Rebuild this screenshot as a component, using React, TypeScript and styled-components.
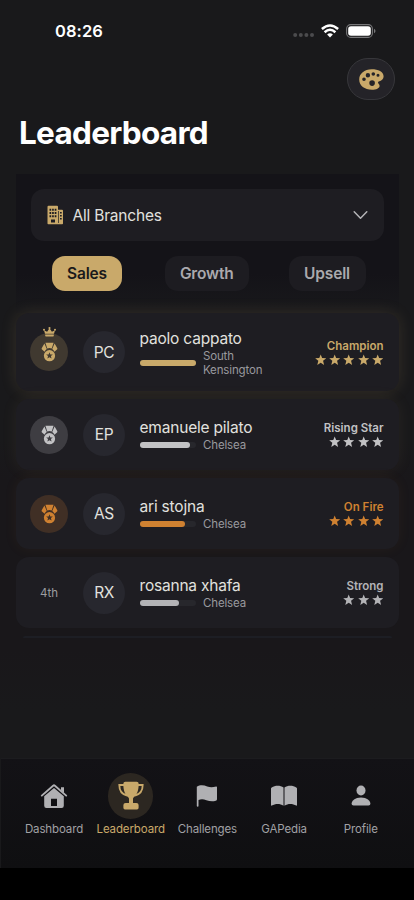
import React from "react";
import styled, { createGlobalStyle } from "styled-components";

const GOLD = "#c9a96a";
const SILVER = "#c2c2c4";
const BRONZE = "#cf8131";

const GlobalStyle = createGlobalStyle`
  *, *::before, *::after { box-sizing: border-box; }
  html, body { margin: 0; padding: 0; background: #000; }
  body { font-family: Inter, "Liberation Sans", sans-serif; }
  svg { display: block; flex: none; }
`;

const Screen = styled.div`
  width: 414px;
  height: 900px;
  overflow: hidden;
  display: flex;
  flex-direction: column;
  background: #000;
`;

const Main = styled.main`
  height: 758px;
  display: flex;
  flex-direction: column;
  background: linear-gradient(180deg, #19191b 0, #19191b 440px, #19171a 480px, #19171a 650px, #19191b 710px);
`;

const StatusBar = styled.div`
  height: 58px;
  padding: 20px 37px 0 55px;
  display: flex;
  justify-content: space-between;
  align-items: flex-start;
`;

const Clock = styled.span`
  font-size: 16.5px;
  line-height: 22px;
  font-weight: 600;
  letter-spacing: 0.08px;
  color: #fff;
`;

const Indicators = styled.div`
  display: flex;
  align-items: center;
  height: 22px;
`;

const WifiSlot = styled.div`
  margin: 0 7px 0 5px;
`;

const Toolbar = styled.div`
  display: flex;
  justify-content: flex-end;
  padding-right: 19px;
  height: 58px;
`;

const RoundButton = styled.button`
  width: 48px;
  height: 42px;
  padding: 0;
  display: flex;
  align-items: center;
  justify-content: center;
  border: 1px solid #37373b;
  border-radius: 21px;
  background: #242328;
`;

const Title = styled.h1`
  margin: 0 0 0 19px;
  height: 58px;
  font-size: 31.5px;
  line-height: 33px;
  font-weight: 700;
  letter-spacing: -0.72px;
  color: #fff;
`;

const Filters = styled.section`
  height: 139px;
  margin: 0 15px 0 15.5px;
  padding: 15px 15.5px 0 15px;
  background: linear-gradient(180deg, #141318 0, #141318 100px, #18181b 133px);
`;

const BranchSelect = styled.button`
  width: 100%;
  height: 52px;
  padding: 0 16px;
  display: flex;
  align-items: center;
  border: 0;
  border-radius: 13px;
  background: #1e1d22;
  color: #e1e1df;
  font: 400 15.5px/20px Inter, sans-serif;
  letter-spacing: -0.2px;
`;

const SelectLabel = styled.span`
  flex: 1;
  margin-left: 9px;
  padding-top: 1px;
  text-align: left;
`;

const Tabs = styled.div`
  display: flex;
  padding: 15px 18px 0 21.5px;
`;

const Tab = styled.button<{ $active?: boolean; $width: number; $gap?: number }>`
  width: ${(p) => p.$width}px;
  height: 34.5px;
  margin-left: ${(p) => p.$gap ?? 0}px;
  padding: 1px 0 0;
  border: 0;
  border-radius: 13px;
  background: ${(p) => (p.$active ? GOLD : "#1d1c21")};
  color: ${(p) => (p.$active ? "#1a191b" : "#aaa9ad")};
  font: 600 15.5px/20px Inter, sans-serif;
  letter-spacing: -0.15px;
`;

const List = styled.section`
  display: flex;
  flex-direction: column;
  gap: 8px;
  padding: 0 15px 0 15.5px;
`;

const Card = styled.article<{ $tall?: boolean; $glow: string }>`
  height: ${(p) => (p.$tall ? 78 : 71)}px;
  padding: 0 15.5px 0 14.5px;
  display: flex;
  align-items: center;
  border-radius: 13px;
  background: #1e1d22;
  box-shadow: ${(p) => p.$glow};
`;

const Rank = styled.div<{ $bg: string }>`
  position: relative;
  width: 38px;
  height: 38px;
  border-radius: 50%;
  display: flex;
  align-items: center;
  justify-content: center;
  background: ${(p) => p.$bg};
  color: #9d9da1;
  font-size: 11.5px;
`;

const CrownSlot = styled.div`
  position: absolute;
  top: -6.5px;
  left: 12.5px;
`;

const Avatar = styled.div`
  width: 42px;
  height: 42px;
  margin-left: 15px;
  border-radius: 50%;
  display: flex;
  align-items: center;
  justify-content: center;
  background: #27272e;
  color: #e1e1df;
  font-size: 15.5px;
  letter-spacing: -0.4px;
`;

const Info = styled.div`
  flex: 1;
  margin-left: 14.5px;
  padding-top: 2px;
`;

const Name = styled.div`
  font-size: 15.5px;
  line-height: 20px;
  letter-spacing: -0.2px;
  color: #e1e1df;
`;

const Meta = styled.div`
  display: flex;
  align-items: center;
  margin-top: 1px;
`;

const Track = styled.div`
  width: 56.5px;
  height: 6px;
  margin-bottom: 2px;
  border-radius: 3px;
  background: #27272c;
`;

const Fill = styled.div<{ $color: string }>`
  height: 6px;
  border-radius: 3px;
  background: ${(p) => p.$color};
`;

const Branch = styled.div`
  width: 75px;
  margin-left: 7px;
  font-size: 11.5px;
  line-height: 13.5px;
  letter-spacing: -0.15px;
  color: #99999e;
`;

const Score = styled.div<{ $color: string }>`
  display: flex;
  flex-direction: column;
  align-items: flex-end;
  color: ${(p) => p.$color};
  font-size: 11.5px;
  line-height: 15px;
  font-weight: 600;
`;

const Stars = styled.div`
  display: flex;
  gap: 2.8px;
  margin-right: 0.3px;
`;

const NextCard = styled.div`
  height: 1.5px;
  margin: 0 7px;
  border-radius: 2px 2px 0 0;
  background: #1d1e24;
`;

const Nav = styled.nav`
  height: 110px;
  padding: 14px 14px 0 14.7px;
  display: grid;
  grid-template-columns: repeat(5, 76.7px);
  border-top: 1px solid #1c1c1f;
  border-left: 1px solid #19191b;
  background: linear-gradient(180deg, #131216, #0f0f11);
`;

const NavItem = styled.a<{ $active?: boolean }>`
  display: flex;
  flex-direction: column;
  align-items: center;
  color: ${(p) => (p.$active ? GOLD : "#a1a1a5")};
  font-size: 11.5px;
  line-height: 14px;
  letter-spacing: -0.12px;
  white-space: nowrap;
`;

const NavIcon = styled.div<{ $active?: boolean }>`
  width: 45.5px;
  height: 45.5px;
  margin-bottom: 3.5px;
  border-radius: 50%;
  display: flex;
  align-items: center;
  justify-content: center;
  color: ${(p) => (p.$active ? GOLD : "#b0b0b3")};
  background: ${(p) => (p.$active ? "#2c2721" : "transparent")};
`;

const SignalDots = () => (
  <svg width="23" height="22" viewBox="0 0 23 22" fill="#4b4b4d">
    {[2.2, 7.8, 13.4, 19].map((x) => (
      <circle key={x} cx={x} cy="15" r="2" />
    ))}
  </svg>
);

const Wifi = () => (
  <svg width="18" height="14" viewBox="0 0 18 14" fill="none" stroke="#fff" strokeWidth="2.5">
    <path d="M.9 5Q9-2.1 17.1 5" />
    <path d="M3.6 8.2Q9 3.4 14.4 8.2" />
    <path d="M6.1 10.4Q9 8 11.9 10.4L9 13.4Z" fill="#fff" stroke="none" />
  </svg>
);

const Battery = () => (
  <svg width="31" height="14" viewBox="0 0 31 14">
    <rect x=".6" y=".6" width="25.8" height="12.8" rx="4.2" fill="none" stroke="#777779" strokeWidth="1.1" />
    <rect x="2.2" y="2.2" width="22.6" height="9.6" rx="2.8" fill="#fff" />
    <path d="M28 4.7Q29.5 5.5 29.5 7T28 9.3Z" fill="#777779" />
  </svg>
);

const Palette = () => (
  <svg width="25" height="21" viewBox="0 0 25 21">
    <path
      fill={GOLD}
      fillRule="evenodd"
      d="M12.7.3C5.4.3.2 4.6.2 10.5.2 16.7 5.6 20.7 13 20.7c4.2 0 7.6-1.5 7.6-4 0-1.6-1.6-2.1-1.6-3.2 0-1 1-1.2 2.2-1.6 1.8-.6 3.4-2 3.4-4.6C24.6 2.7 19.2.3 12.7.3ZM5 8.4a1.8 1.8 0 1 1 0 3.6 1.8 1.8 0 0 1 0-3.6ZM8.9 4.1a2.2 2.2 0 1 1 0 4.4 2.2 2.2 0 0 1 0-4.4ZM14.3 3.2a1.8 1.8 0 1 1 0 3.6 1.8 1.8 0 0 1 0-3.6ZM19 4.7a1.5 1.5 0 1 1 0 3 1.5 1.5 0 0 1 0-3ZM13.1 11.3a2.8 2.8 0 1 1 0 5.6 2.8 2.8 0 0 1 0-5.6Z"
    />
  </svg>
);

const Building = () => (
  <svg width="17" height="20" viewBox="0 0 17 20">
    <path
      fill={GOLD}
      fillRule="evenodd"
      d="M1.5.8H10q1 0 1 1v3h4q1 0 1 1v12.7q0 .8-.8.8H1.3q-.8 0-.8-.8V1.8q0-1 1-1ZM2.5 3.7v2h1.7v-2ZM5.1 3.7v2h1.7v-2ZM7.7 3.7v2h1.7v-2ZM2.5 7v2h1.7V7ZM5.1 7v2h1.7V7ZM7.7 7v2h1.7V7ZM2.5 10.3v2h1.7v-2ZM5.1 10.3v2h1.7v-2ZM7.7 10.3v2h1.7v-2ZM4 14.5v3.1h4v-3.1ZM11.1 6v12h.7V6ZM13 7v1.5h1.7V7ZM13 10v1.5h1.7V10ZM13 13v1.5h1.7V13Z"
    />
  </svg>
);

const Chevron = () => (
  <svg width="15" height="10" viewBox="0 0 15 10" fill="none" stroke="#b4b4b7" strokeWidth="1.5" strokeLinecap="round" strokeLinejoin="round">
    <path d="M1.2 1.7 7.5 8.2 13.8 1.7" />
  </svg>
);

const STAR_PATH = "M6 .2 7.5 4 11.8 4.2 8.5 6.9 9.6 11.2 6 8.8 2.4 11.2 3.5 6.9 .2 4.2 4.5 4Z";

const Star = () => (
  <svg width="11.4" height="11.4" viewBox="0 0 12 11.4" fill="currentColor">
    <path d={STAR_PATH} />
  </svg>
);

const Medal = ({ color, hole }: { color: string; hole: string }) => (
  <svg width="17" height="20" viewBox="0 0 17 20" fill={color}>
    <path d="M4.4.8H12.6L10.7 6.5Q8.5 5.7 6.3 6.5Z" />
    <path d="M3.4 1.6 5.8 7Q4.2 8.1 3.6 9.8L1 7.5Q.4 6.9.7 6.2ZM13.6 1.6 11.2 7Q12.8 8.1 13.4 9.8L16 7.5Q16.6 6.9 16.3 6.2Z" />
    <circle cx="8.5" cy="13.7" r="5.6" />
    <path fill={hole} transform="translate(5 10.1) scale(.58)" d={STAR_PATH} />
  </svg>
);

const Crown = () => (
  <svg width="13" height="10" viewBox="0 0 13 10" fill={GOLD}>
    <path d="M2 6.8 1 3.3 4.1 4.8 6.5 1.2 8.9 4.8 12 3.3 11 6.8ZM2.2 7.5H10.8V8.7Q10.8 9.5 10 9.5H3Q2.2 9.5 2.2 8.7Z" />
    <circle cx="1" cy="2.8" r="1" />
    <circle cx="6.5" cy="1.1" r="1.1" />
    <circle cx="12" cy="2.8" r="1" />
  </svg>
);

const House = () => (
  <svg width="28" height="26" viewBox="0 0 28 26">
    <path d="M1.8 12.6 13.1 2.7Q14 2 14.9 2.7L26.2 12.6" fill="none" stroke="currentColor" strokeWidth="1.9" strokeLinecap="round" />
    <path d="M21 4.2H24V10L21 7.4Z" fill="currentColor" />
    <path fill="currentColor" fillRule="evenodd" d="M4.2 13.2 14 5.1 23.8 13.2V22.8Q23.8 25 21.6 25H6.4Q4.2 25 4.2 22.8ZM11 15.8V23H17V15.8Z" />
  </svg>
);

const Trophy = () => (
  <svg width="26" height="29" viewBox="0 0 26 29">
    <path d="M6 4H1.3C1.3 9.5 3.4 13.2 9 14.5M20 4H24.7C24.7 9.5 22.6 13.2 17 14.5" fill="none" stroke="currentColor" strokeWidth="1.8" />
    <path fill="currentColor" d="M7.4.8H18.6Q20.7.8 20.7 3C20.7 10 18.6 14.2 15.6 16.6Q15 17.1 15 18V22H18.4Q20.6 22 20.6 24V26.7Q20.6 28.4 19 28.4H7Q5.4 28.4 5.4 26.7V24Q5.4 22 7.6 22H11V18Q11 17.1 10.4 16.6C7.4 14.2 5.3 10 5.3 3Q5.3.8 7.4.8Z" />
  </svg>
);

const Flag = () => (
  <svg width="22" height="24" viewBox="0 0 22 24" fill="currentColor">
    <path d="M.8 2.8C4.2.5 8 1.2 11.2 2.4 14.5 3.7 17.2 3.2 20.2 2.5Q21 2.4 21 3.3V15.3Q21 16.5 19.8 16.8C16.5 17.8 13.3 17.3 10.4 16.2 7.2 15 4.5 15.2 2.5 16V22Q2.5 22.8 1.7 22.8T.8 22Z" />
  </svg>
);

const Book = () => (
  <svg width="28" height="22" viewBox="0 0 28 22" fill="currentColor">
    <path d="M13.5 2.5V20.7C10 18.3 5.2 18.5 1.8 20.6Q1 21 1 20V3.6Q1 2.9 1.7 2.4C5 .2 10.5.2 13.5 2.5ZM14.5 2.5V20.7C18 18.3 22.8 18.5 26.2 20.6Q27 21 27 20V3.6Q27 2.9 26.3 2.4C23 .2 17.5.2 14.5 2.5Z" />
  </svg>
);

const Person = () => (
  <svg width="20" height="21" viewBox="0 0 20 21" fill="currentColor">
    <ellipse cx="10" cy="5.5" rx="4.5" ry="5" />
    <path d="M.6 18.8C.6 15.7 4.1 12.4 10 12.4S19.4 15.7 19.4 18.8Q19.4 20.6 17.5 20.6H2.5Q.6 20.6.6 18.8Z" />
  </svg>
);

const players = [
  { name: "paolo cappato", initials: "PC", branch: "South Kensington", level: "Champion", stars: 5, value: 100, color: GOLD, badge: "#403930", glow: "0 0 16px #c9a96a28" },
  { name: "emanuele pilato", initials: "EP", branch: "Chelsea", level: "Rising Star", stars: 4, value: 90, color: SILVER, badge: "#3e3d42", glow: "0 0 16px #c9a96a14" },
  { name: "ari stojna", initials: "AS", branch: "Chelsea", level: "On Fire", stars: 4, value: 80, color: BRONZE, badge: "#402f25", glow: "0 0 14px #cf813110" },
  { name: "rosanna xhafa", initials: "RX", branch: "Chelsea", level: "Strong", stars: 3, value: 70, color: "#b3b3b6", badge: "", glow: "none" },
];

const navItems = [
  { label: "Dashboard", icon: <House /> },
  { label: "Leaderboard", icon: <Trophy />, active: true },
  { label: "Challenges", icon: <Flag /> },
  { label: "GAPedia", icon: <Book /> },
  { label: "Profile", icon: <Person /> },
];

export default function App() {
  return (
    <>
      <GlobalStyle />
      <Screen>
        <Main>
          <StatusBar>
            <Clock>08:26</Clock>
            <Indicators>
              <SignalDots />
              <WifiSlot><Wifi /></WifiSlot>
              <Battery />
            </Indicators>
          </StatusBar>
          <Toolbar>
            <RoundButton aria-label="Theme"><Palette /></RoundButton>
          </Toolbar>
          <Title>Leaderboard</Title>
          <Filters>
            <BranchSelect>
              <Building />
              <SelectLabel>All Branches</SelectLabel>
              <Chevron />
            </BranchSelect>
            <Tabs>
              <Tab $active $width={70}>Sales</Tab>
              <Tab $width={84.5} $gap={42.5}>Growth</Tab>
              <Tab $width={77} $gap={39.5}>Upsell</Tab>
            </Tabs>
          </Filters>
          <List>
            {players.map((p, i) => (
              <Card key={p.name} $tall={i === 0} $glow={p.glow}>
                <Rank $bg={p.badge || "transparent"}>
                  {i === 0 && <CrownSlot><Crown /></CrownSlot>}
                  {p.badge ? <Medal color={p.color} hole={p.badge} /> : "4th"}
                </Rank>
                <Avatar>{p.initials}</Avatar>
                <Info>
                  <Name>{p.name}</Name>
                  <Meta>
                    <Track><Fill $color={p.color} style={{ width: `${p.value}%` }} /></Track>
                    <Branch>{p.branch}</Branch>
                  </Meta>
                </Info>
                <Score $color={p.color}>
                  {p.level}
                  <Stars>{Array.from({ length: p.stars }, (_, s) => <Star key={s} />)}</Stars>
                </Score>
              </Card>
            ))}
            <NextCard />
          </List>
        </Main>
        <Nav>
          {navItems.map((item) => (
            <NavItem key={item.label} $active={item.active}>
              <NavIcon $active={item.active}>{item.icon}</NavIcon>
              {item.label}
            </NavItem>
          ))}
        </Nav>
      </Screen>
    </>
  );
}
